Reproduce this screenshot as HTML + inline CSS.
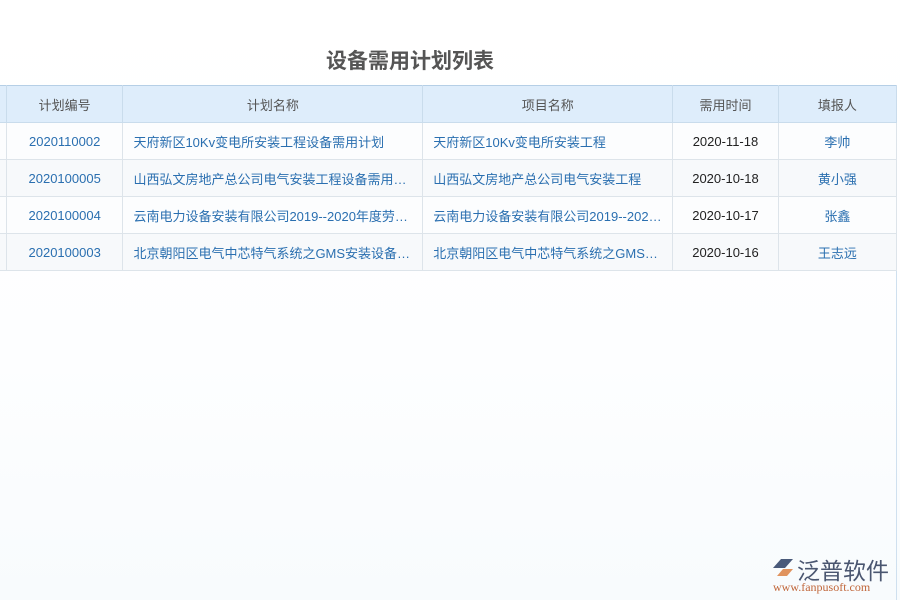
<!DOCTYPE html>
<html><head><meta charset="utf-8"><style>
body{margin:0;width:900px;height:600px;background:linear-gradient(#fff,#fdfeff 60%,#f8fbfd);font-family:"Liberation Sans","Noto Sans CJK SC",sans-serif;position:relative;overflow:hidden}
h1{position:absolute;left:0;width:820px;top:45px;margin:0;text-align:center;font-size:21px;font-weight:bold;color:#555}
.rb{position:absolute;left:896px;top:85px;width:1px;height:515px;background:#cfe0ef}
table{position:absolute;left:-3px;top:85px;border-collapse:collapse;font-size:13px}
td,th{height:36px;border:1px solid #dde4ea;padding:0;white-space:nowrap;overflow:hidden}
th{background:#deedfb;font-weight:normal;color:#555;border-color:#c9dcec;border-top:1px solid #b5cfe6}
td{color:#2a6fb0;background:#fcfdfe}
tr:nth-child(odd) td{background:#f7f9fb}
.c{text-align:center}.l{padding-left:10px;text-align:left}
.d{color:#222}
</style></head><body>
<h1>设备需用计划列表</h1>
<div class="rb"></div>
<table>
<tr><th style="width:8px"></th><th style="width:116px">计划编号</th><th style="width:299px">计划名称</th><th style="width:249px">项目名称</th><th style="width:105px">需用时间</th><th style="width:118px">填报人</th></tr>
<tr><td></td><td class="c">2020110002</td><td class="l">天府新区10Kv变电所安装工程设备需用计划</td><td class="l">天府新区10Kv变电所安装工程</td><td class="c d">2020-11-18</td><td class="c">李帅</td></tr>
<tr><td></td><td class="c">2020100005</td><td class="l">山西弘文房地产总公司电气安装工程设备需用…</td><td class="l">山西弘文房地产总公司电气安装工程</td><td class="c d">2020-10-18</td><td class="c">黄小强</td></tr>
<tr><td></td><td class="c">2020100004</td><td class="l">云南电力设备安装有限公司2019--2020年度劳…</td><td class="l">云南电力设备安装有限公司2019--202…</td><td class="c d">2020-10-17</td><td class="c">张鑫</td></tr>
<tr><td></td><td class="c">2020100003</td><td class="l">北京朝阳区电气中芯特气系统之GMS安装设备…</td><td class="l">北京朝阳区电气中芯特气系统之GMS…</td><td class="c d">2020-10-16</td><td class="c">王志远</td></tr>
</table>
<svg style="position:absolute;left:771px;top:556px" width="24" height="22"><path d="M2 12 L10 3 L22 3 L14 12Z" fill="#4a5a7a"/><path d="M6 20 L12 13 L22 13 L16 20Z" fill="#e0935e"/></svg>
<div style="position:absolute;left:797px;top:552px;font-size:23px;color:#4a5670">泛普软件</div>
<div style="position:absolute;left:773px;top:580px;font-size:12px;color:#c0663a;font-family:'Liberation Serif',serif">www.fanpusoft.com</div>
</body></html>
